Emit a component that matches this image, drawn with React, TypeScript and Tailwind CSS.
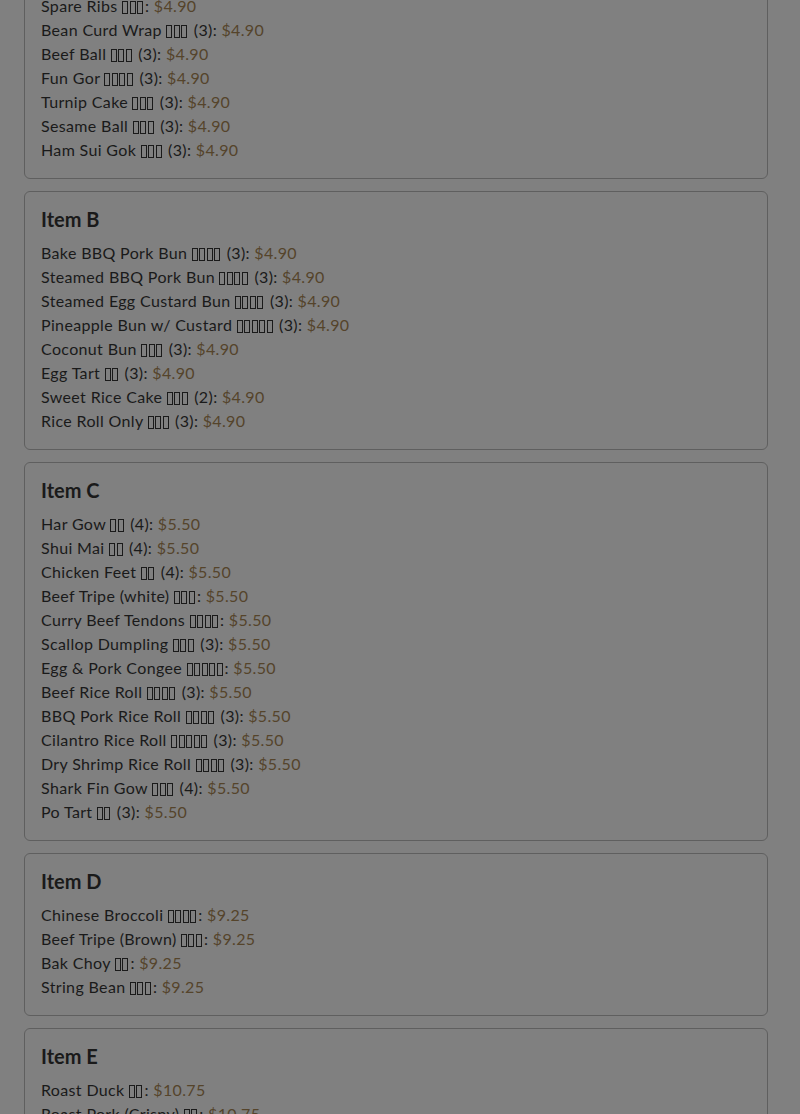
type Item = { name: string; zh: number; qty?: number }

interface Section {
  title?: string
  price: string
  items: Item[]
}

const sections: Section[] = [
  {
    price: '$4.90',
    items: [
      { name: 'Spare Ribs', zh: 3 },
      { name: 'Bean Curd Wrap', zh: 3, qty: 3 },
      { name: 'Beef Ball', zh: 3, qty: 3 },
      { name: 'Fun Gor', zh: 4, qty: 3 },
      { name: 'Turnip Cake', zh: 3, qty: 3 },
      { name: 'Sesame Ball', zh: 3, qty: 3 },
      { name: 'Ham Sui Gok', zh: 3, qty: 3 },
    ],
  },
  {
    title: 'Item B',
    price: '$4.90',
    items: [
      { name: 'Bake BBQ Pork Bun', zh: 4, qty: 3 },
      { name: 'Steamed BBQ Pork Bun', zh: 4, qty: 3 },
      { name: 'Steamed Egg Custard Bun', zh: 4, qty: 3 },
      { name: 'Pineapple Bun w/ Custard', zh: 5, qty: 3 },
      { name: 'Coconut Bun', zh: 3, qty: 3 },
      { name: 'Egg Tart', zh: 2, qty: 3 },
      { name: 'Sweet Rice Cake', zh: 3, qty: 2 },
      { name: 'Rice Roll Only', zh: 3, qty: 3 },
    ],
  },
  {
    title: 'Item C',
    price: '$5.50',
    items: [
      { name: 'Har Gow', zh: 2, qty: 4 },
      { name: 'Shui Mai', zh: 2, qty: 4 },
      { name: 'Chicken Feet', zh: 2, qty: 4 },
      { name: 'Beef Tripe (white)', zh: 3 },
      { name: 'Curry Beef Tendons', zh: 4 },
      { name: 'Scallop Dumpling', zh: 3, qty: 3 },
      { name: 'Egg & Pork Congee', zh: 5 },
      { name: 'Beef Rice Roll', zh: 4, qty: 3 },
      { name: 'BBQ Pork Rice Roll', zh: 4, qty: 3 },
      { name: 'Cilantro Rice Roll', zh: 5, qty: 3 },
      { name: 'Dry Shrimp Rice Roll', zh: 4, qty: 3 },
      { name: 'Shark Fin Gow', zh: 3, qty: 4 },
      { name: 'Po Tart', zh: 2, qty: 3 },
    ],
  },
  {
    title: 'Item D',
    price: '$9.25',
    items: [
      { name: 'Chinese Broccoli', zh: 4 },
      { name: 'Beef Tripe (Brown)', zh: 3 },
      { name: 'Bak Choy', zh: 2 },
      { name: 'String Bean', zh: 3 },
    ],
  },
  {
    title: 'Item E',
    price: '$10.75',
    items: [
      { name: 'Roast Duck', zh: 2 },
      { name: 'Roast Pork (Crispy)', zh: 2 },
    ],
  },
]

// missing-glyph boxes, as the page renders its Chinese names
function Tofu({ count }: { count: number }) {
  return (
    <span className="inline-flex gap-[1.5px] align-[-2px] mr-[2px]">
      {Array.from({ length: count }).map((_, i) => (
        <span key={i} className="inline-block w-[6px] h-[13px] border border-[#1a1a1a]" />
      ))}
    </span>
  )
}

function Card({ section, first }: { section: Section; first?: boolean }) {
  return (
    <div className={'rounded-md border border-[#5f5f5f] p-4' + (first ? ' -mt-[23px]' : '')}>
      {section.title && (
        <h5 className="text-[20px] leading-[22px] font-bold text-[#1a1a1a] mb-[11px]">
          {section.title}
        </h5>
      )}
      <ul>
        {section.items.map((it) => (
          <li key={it.name} className="text-base leading-6 tracking-[0.35px] text-[#1a1a1a]">
            {it.name} <Tofu count={it.zh} />
            {it.qty ? ` (${it.qty})` : ''}: <span className="text-[#55442b]">{section.price}</span>
          </li>
        ))}
      </ul>
    </div>
  )
}

export default function App() {
  return (
    <div
      className="h-[1114px] overflow-hidden bg-[#808080]"
      style={{ fontFamily: 'Lato, "Noto Sans", sans-serif' }}
    >
      <div className="pl-6 pr-8 flex flex-col gap-3">
        {sections.map((s, i) => (
          <Card key={i} section={s} first={i === 0} />
        ))}
      </div>
    </div>
  )
}
